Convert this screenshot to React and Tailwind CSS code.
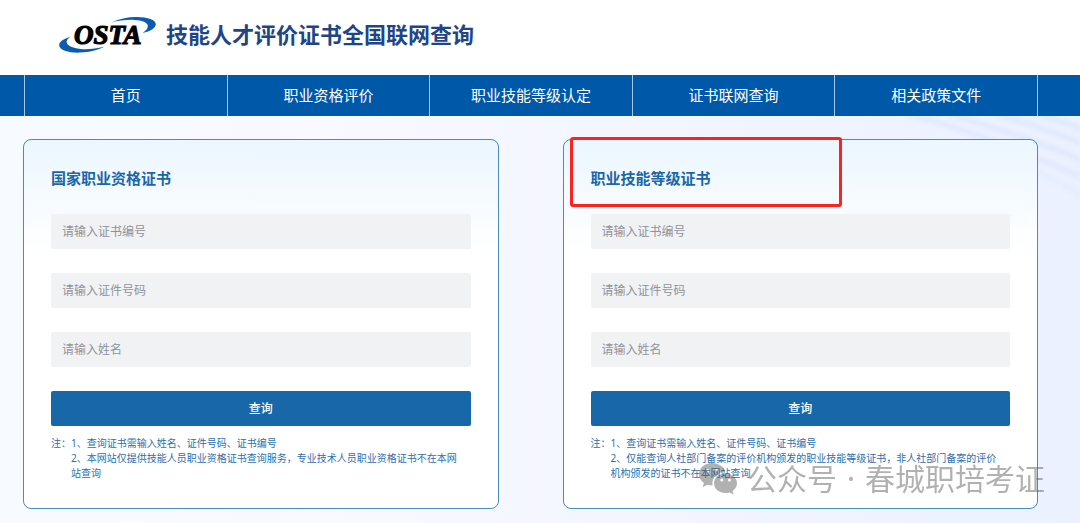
const navItems = ['首页', '职业资格评价', '职业技能等级认定', '证书联网查询', '相关政策文件'];

const fields = [
  { name: 'certificate', label: '证书编号', placeholder: '请输入证书编号' },
  { name: 'identity', label: '证件号码', placeholder: '请输入证件号码' },
  { name: 'fullname', label: '姓名', placeholder: '请输入姓名' },
];

function Logo() {
  return (
    <svg viewBox="0 0 99 39" className="h-[39px] w-[99px] shrink-0" role="img" aria-label="OSTA">
      <path
        d="M13 21.800C5 24 1 27 1.200 30.200C1.600 35.200 11 38 22 37.600C31.500 37.200 40 35 46 31.800C38 33.800 30 34.600 22.500 34C14.500 33.200 8.800 30.500 8.600 27C8.600 25 10 23.200 13 21.800Z"
        fill="#0a5cb0"
      />
      <path
        d="M52.500 7.700C61 3.800 70 1.900 79 2C89.500 2.200 98 4.800 97.800 9.500C97.600 13 92.500 16.500 84.500 18C88 15.800 90 13.500 89.800 10.800C89.500 7 84 5.200 76 4.900C68 4.700 60 5.600 52.500 7.700Z"
        fill="#0a5cb0"
      />
      <text
        x="16"
        y="29"
        fontSize="27"
        fontWeight="700"
        fontStyle="italic"
        fontFamily="Liberation Serif, serif"
        fill="#000"
        stroke="#000"
        strokeWidth="1.2"
      >
        OSTA
      </text>
    </svg>
  );
}

function Streaks() {
  return (
    <svg
      viewBox="0 0 260 130"
      className="pointer-events-none absolute right-0 top-0 h-[130px] w-[260px] blur-[2px]"
      fill="none"
      stroke="#d9e6fc"
      strokeWidth="5"
      strokeOpacity="0.7"
      aria-hidden="true"
    >
      <path d="M80 -4C150 14 210 36 270 66" />
      <path d="M120 -4C180 12 225 28 270 48" />
      <path d="M165 -4C205 6 240 18 270 31" />
      <path d="M205 -4C230 2 250 8 270 16" />
      <path d="M180 40C210 50 240 66 270 84" strokeOpacity="0.4" />
    </svg>
  );
}

function QueryCard({ id, title, note, highlighted }) {
  return (
    <section className="relative rounded-lg border border-[#4a8cc0] bg-white bg-linear-to-b from-[#ebf6ff] to-white to-30% px-[27px] pb-[27px] pt-[26px]">
      <h2 className="text-[15px] font-bold leading-6 text-[#1a66a8]">{title}</h2>
      {highlighted && (
        <div className="pointer-events-none absolute -top-[3px] left-[6px] h-[70px] w-[272px] rounded-[3px] border-3 border-[#fb231c]" />
      )}
      <form className="mt-6 flex flex-col gap-6" onSubmit={(e) => e.preventDefault()}>
        {fields.map((field) => (
          <input
            key={field.name}
            id={`${id}-${field.name}`}
            type="text"
            aria-label={field.label}
            placeholder={field.placeholder}
            className="h-[35px] w-full rounded-xs bg-[#f1f2f4] px-[11px] text-xs text-gray-700 outline-none placeholder:text-[#8f939b]"
          />
        ))}
        <button
          type="submit"
          className="h-[35px] w-full rounded-xs bg-[#1868a9] text-xs font-medium text-white"
        >
          查询
        </button>
      </form>
      <div className="mt-[10px] flex pr-2 text-[10px] leading-[15px] text-[#2c6fae]">
        <span className="w-5 shrink-0">注：</span>
        <div>
          <p>1、查询证书需输入姓名、证件号码、证书编号</p>
          <p>{note}</p>
        </div>
      </div>
    </section>
  );
}

function Watermark() {
  return (
    <div className="pointer-events-none absolute bottom-6 right-[35px] flex items-center text-[#555] opacity-45">
      <svg viewBox="0 0 40 34" className="mr-[9px] h-[34px] w-10" fill="currentColor" aria-hidden="true">
        <path
          fillRule="evenodd"
          d="M14 1C6.300 1 1 6 1 12.300C1 15.900 2.900 19 6 21.100L4.600 25.200L9.300 22.800C11 23.300 12.700 23.500 14.500 23.500C13.300 16.200 19.300 9.800 27.300 9.700C26 4.600 20.600 1 14 1ZM9.500 7A1.700 1.700 0 1 1 9.500 10.400A1.700 1.700 0 1 1 9.500 7ZM18.500 7A1.700 1.700 0 1 1 18.500 10.400A1.700 1.700 0 1 1 18.500 7Z"
        />
        <path
          fillRule="evenodd"
          d="M27.500 11.500C21 11.500 16 15.800 16 21.200C16 26.600 21 31 27.500 31C28.900 31 30.300 30.800 31.600 30.400L35.600 32.600L34.500 28.900C37.300 27.100 39 24.300 39 21.200C39 15.800 34 11.500 27.500 11.500ZM23.800 16.500A1.500 1.500 0 1 1 23.800 19.500A1.500 1.500 0 1 1 23.800 16.500ZM31.400 16.500A1.500 1.500 0 1 1 31.400 19.500A1.500 1.500 0 1 1 31.400 16.500Z"
        />
      </svg>
      <span className="flex gap-[10px] whitespace-nowrap text-[30px] leading-10">
        <span>公众号</span>
        <span>·</span>
        <span>春城职培考证</span>
      </span>
    </div>
  );
}

export default function App() {
  return (
    <div className="flex min-h-screen flex-col bg-white font-['Noto_Sans','Noto_Sans_CJK_SC',sans-serif]">
      <header className="flex h-[75px] items-center gap-[9px] pb-[6px] pl-[58px]">
        <Logo />
        <h1 className="text-[22px] font-bold text-[#1f4587]">技能人才评价证书全国联网查询</h1>
      </header>
      <nav className="bg-[#0058a9] pl-6 pr-[42px]">
        <ul className="flex border-r border-[#a9c8e4]">
          {navItems.map((item) => (
            <li key={item} className="flex-1 border-l border-[#a9c8e4]">
              <a href="#" className="block text-center text-[15px] leading-[41px] text-white">
                {item}
              </a>
            </li>
          ))}
        </ul>
      </nav>
      <main className="relative flex-1 overflow-hidden bg-linear-to-r from-[#f6fbff] via-[#f9f9ff] via-30% to-[#ebf1ff] pb-[14px] pl-[23px] pr-[42px] pt-[23px]">
        <Streaks />
        <div className="relative grid grid-cols-2 gap-16">
          <QueryCard
            id="qualification"
            title="国家职业资格证书"
            note="2、本网站仅提供技能人员职业资格证书查询服务，专业技术人员职业资格证书不在本网站查询"
          />
          <QueryCard
            id="skill"
            title="职业技能等级证书"
            note="2、仅能查询人社部门备案的评价机构颁发的职业技能等级证书，非人社部门备案的评价机构颁发的证书不在本网站查询"
            highlighted
          />
        </div>
        <Watermark />
      </main>
    </div>
  );
}
